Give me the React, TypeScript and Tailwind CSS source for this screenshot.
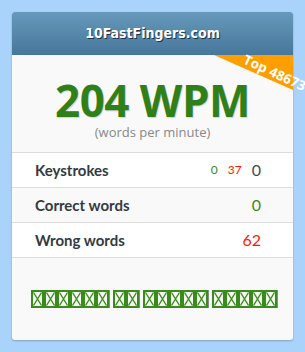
import React from 'react';

const words = [6, 2, 5, 5];

const Tofu: React.FC = () => (
  <svg width="13" height="18" viewBox="0 0 13 18" className="block">
    <rect x="1" y="1" width="11" height="16" fill="#f4f8f0" stroke="#3a8a1e" strokeWidth="2" />
    <path d="M2.5 2.5 L10.5 15.5 M10.5 2.5 L2.5 15.5" stroke="#3a8a1e" strokeWidth="1.4" />
  </svg>
);

interface StatRow {
  label: string;
  value: React.ReactNode;
  shaded?: boolean;
}

const rows: StatRow[] = [
  {
    label: 'Keystrokes',
    value: (
      <span className="flex items-center gap-[10px]">
        <span className="text-[12px] text-[#3c8a1c]">0</span>
        <span className="text-[12px] text-[#ff1a00]">37</span>
        <span className="text-[16px] text-[#444a52]">0</span>
      </span>
    ),
  },
  {
    label: 'Correct words',
    value: <span className="text-[16px] text-[#3c8a1c]">0</span>,
    shaded: true,
  },
  {
    label: 'Wrong words',
    value: <span className="text-[16px] text-[#ff1a00]">62</span>,
  },
];

export default function App() {
  return (
    <div className="min-h-[352px] w-[305px] overflow-hidden bg-[#aad3fc] pt-3 px-3 font-['Lato',sans-serif]">
      <div className="relative rounded-[3px] bg-[#f9f9f9] shadow-[0_1px_2px_rgba(0,0,0,0.25)]">
        {/* Header */}
        <div className="flex h-[43px] items-center justify-center rounded-t-[3px] bg-gradient-to-b from-[#6699bb] to-[#47779a]">
          <span className="font-['DejaVu_Sans_Condensed','DejaVu_Sans',sans-serif] text-[14px] font-bold text-white [text-shadow:1px_1px_0_#1d3447]">
            10FastFingers.com
          </span>
        </div>

        {/* Result */}
        <div className="relative flex h-[97px] flex-col items-center pt-[26px]">
          <div className="absolute right-0 top-0 h-[35px] w-[79px] bg-[#ff9e00] [clip-path:polygon(0_0,100%_0,100%_100%)]" />
          <span className="absolute left-[235px] top-[-2px] z-10 origin-top-left rotate-[25deg] whitespace-nowrap font-['Open_Sans',sans-serif] text-[13.5px] font-bold leading-none text-white">
            Top 48673%
          </span>
          <div className="font-['Open_Sans',sans-serif] text-[44px] font-bold leading-[38px] tracking-[-0.5px] text-[#30801a] [text-shadow:1px_1px_1px_rgba(0,0,0,0.15)]">
            204 WPM
          </div>
          <div className="mt-[4px] font-['Open_Sans',sans-serif] text-[13px] leading-[18px] text-[#888]">
            (words per minute)
          </div>
        </div>

        {/* Stats */}
        <div className="border-t border-[#dddddd]">
          {rows.map((row) => (
            <div
              key={row.label}
              className={`flex h-[35px] items-center justify-between border-b border-[#dddddd] pl-[23px] pr-[32px] ${row.shaded ? 'bg-[#f9f9f9]' : 'bg-white'}`}
            >
              <span className="text-[15px] font-bold text-[#343a42]">{row.label}</span>
              {row.value}
            </div>
          ))}
        </div>

        {/* Footer */}
        <div className="flex h-[82px] items-center justify-center gap-[4px] rounded-b-[3px] pl-[2px]">
          {words.map((n, i) => (
            <span key={i} className="flex [filter:drop-shadow(1px_0_0_#8a8a8a)]">
              {Array.from({ length: n }).map((_, j) => (
                <Tofu key={j} />
              ))}
            </span>
          ))}
        </div>
      </div>
    </div>
  );
}
